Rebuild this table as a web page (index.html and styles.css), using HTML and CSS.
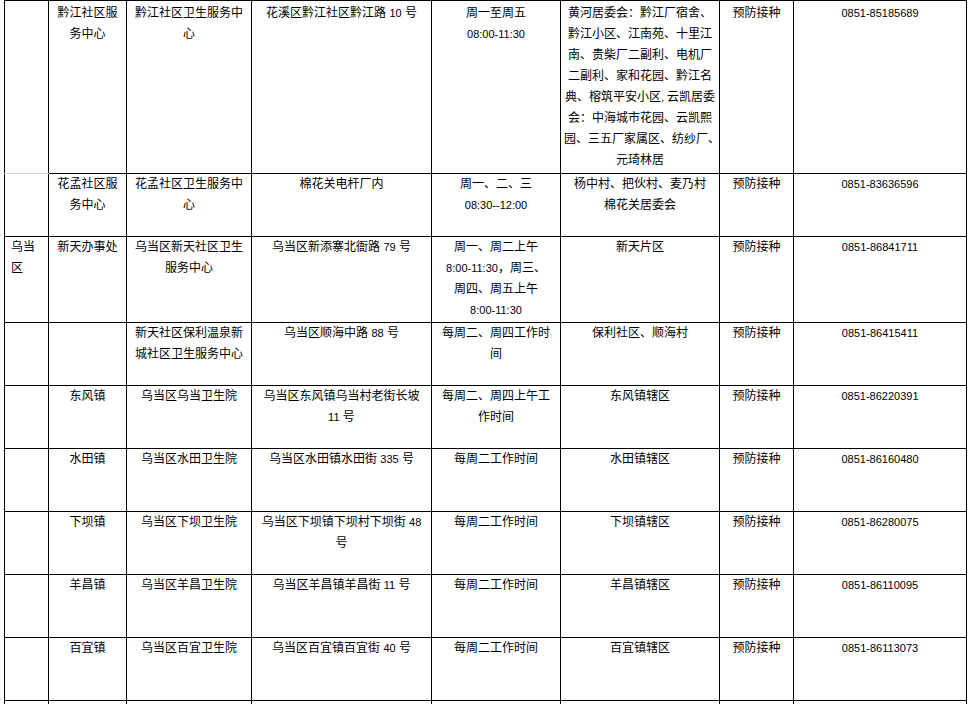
FILE: index.html
```html
<!DOCTYPE html>
<html lang="zh-CN">
<head>
<meta charset="utf-8">
<title>预防接种门诊一览</title>
<link rel="stylesheet" href="styles.css">
</head>
<body>
<div class="sheet">
<table class="grid">
<colgroup>
<col class="w1"><col class="w2"><col class="w3"><col class="w4"><col class="w5"><col class="w6"><col class="w7"><col class="w8">
</colgroup>
<tbody>
<tr class="r-tall first">
<td class="soft-b"></td>
<td>黔江社区服务中心</td>
<td>黔江社区卫生服务中心</td>
<td>花溪区黔江社区黔江路 <span class="n">10</span> 号</td>
<td>周一至周五<br><span class="n">08:00-11:30</span></td>
<td class="list">黄河居委会：黔江厂宿舍、<br>黔江小区、江南苑、十里江<br>南、贵柴厂二副利、电机厂<br>二副利、家和花园、黔江名<br>典、榕筑平安小区<span class="n">, </span>云凯居委<br>会：中海城市花园、云凯熙<br>园、三五厂家属区、纺纱厂、<br>元琦林居</td>
<td>预防接种</td>
<td><span class="n">0851-85185689</span></td>
</tr>
<tr class="r-std">
<td class="soft-t"></td>
<td>花孟社区服务中心</td>
<td>花孟社区卫生服务中心</td>
<td>棉花关电杆厂内</td>
<td>周一、二、三<br><span class="n">08:30--12:00</span></td>
<td class="list">杨中村、把伙村、麦乃村<br>棉花关居委会</td>
<td>预防接种</td>
<td><span class="n">0851-83636596</span></td>
</tr>
<tr class="r-mid">
<td class="left">乌当区</td>
<td>新天办事处</td>
<td>乌当区新天社区卫生服务中心</td>
<td>乌当区新添寨北衙路 <span class="n">79</span> 号</td>
<td>周一、周二上午<br><span class="n">8:00-11:30</span>，周三、<br>周四、周五上午<br><span class="n">8:00-11:30</span></td>
<td>新天片区</td>
<td>预防接种</td>
<td><span class="n">0851-86841711</span></td>
</tr>
<tr class="r-std">
<td></td>
<td></td>
<td>新天社区保利温泉新城社区卫生服务中心</td>
<td>乌当区顺海中路 <span class="n">88</span> 号</td>
<td>每周二、周四工作时间</td>
<td>保利社区、顺海村</td>
<td>预防接种</td>
<td><span class="n">0851-86415411</span></td>
</tr>
<tr class="r-std">
<td></td>
<td>东风镇</td>
<td>乌当区乌当卫生院</td>
<td>乌当区东风镇乌当村老街长坡<br><span class="n">11</span> 号</td>
<td>每周二、周四上午工作时间</td>
<td>东风镇辖区</td>
<td>预防接种</td>
<td><span class="n">0851-86220391</span></td>
</tr>
<tr class="r-std">
<td></td>
<td>水田镇</td>
<td>乌当区水田卫生院</td>
<td>乌当区水田镇水田街 <span class="n">335</span> 号</td>
<td>每周二工作时间</td>
<td>水田镇辖区</td>
<td>预防接种</td>
<td><span class="n">0851-86160480</span></td>
</tr>
<tr class="r-std">
<td></td>
<td>下坝镇</td>
<td>乌当区下坝卫生院</td>
<td>乌当区下坝镇下坝村下坝街 <span class="n">48</span><br>号</td>
<td>每周二工作时间</td>
<td>下坝镇辖区</td>
<td>预防接种</td>
<td><span class="n">0851-86280075</span></td>
</tr>
<tr class="r-std">
<td></td>
<td>羊昌镇</td>
<td>乌当区羊昌卫生院</td>
<td>乌当区羊昌镇羊昌街 <span class="n">11</span> 号</td>
<td>每周二工作时间</td>
<td>羊昌镇辖区</td>
<td>预防接种</td>
<td><span class="n">0851-86110095</span></td>
</tr>
<tr class="r-std">
<td></td>
<td>百宜镇</td>
<td>乌当区百宜卫生院</td>
<td>乌当区百宜镇百宜街 <span class="n">40</span> 号</td>
<td>每周二工作时间</td>
<td>百宜镇辖区</td>
<td>预防接种</td>
<td><span class="n">0851-86113073</span></td>
</tr>
<tr class="r-std">
<td></td><td></td><td></td><td></td><td></td><td></td><td></td><td></td>
</tr>
</tbody>
</table>
</div>
</body>
</html>
```
FILE: styles.css
```css
html, body {
  margin: 0;
  padding: 0;
  background: #fff;
  overflow: hidden;
}
body {
  font-family: "Liberation Sans", "Noto Sans CJK SC", sans-serif;
  font-size: 12px;
  color: #000;
}
.sheet {
  padding-left: 4px;
}
.grid {
  border-collapse: collapse;
  table-layout: fixed;
  width: 963px;
}
.grid td {
  border: 1px solid #000;
  padding: 0 5px;
  vertical-align: top;
  text-align: center;
  line-height: 21px;
}
.w1 { width: 44px; }
.w2 { width: 78px; }
.w3 { width: 125px; }
.w4 { width: 180px; }
.w5 { width: 129px; }
.w6 { width: 159px; }
.w7 { width: 74px; }
.w8 { width: 173px; }

.r-tall { height: 173px; }
.r-mid { height: 86px; }
.r-std { height: 63px; }
.first td { padding-top: 2px; }

.grid td.left { text-align: left; padding-left: 6px; }
.grid td.list { white-space: nowrap; padding: 0 3px; }
.first td.list { padding-top: 2px; }
.grid td.soft-b { border-bottom-color: #d4d4d4; }
.grid td.soft-t { border-top-color: #d4d4d4; }

.n {
  font-family: "Liberation Sans", sans-serif;
  font-size: 11px;
  line-height: 1;
}
```
